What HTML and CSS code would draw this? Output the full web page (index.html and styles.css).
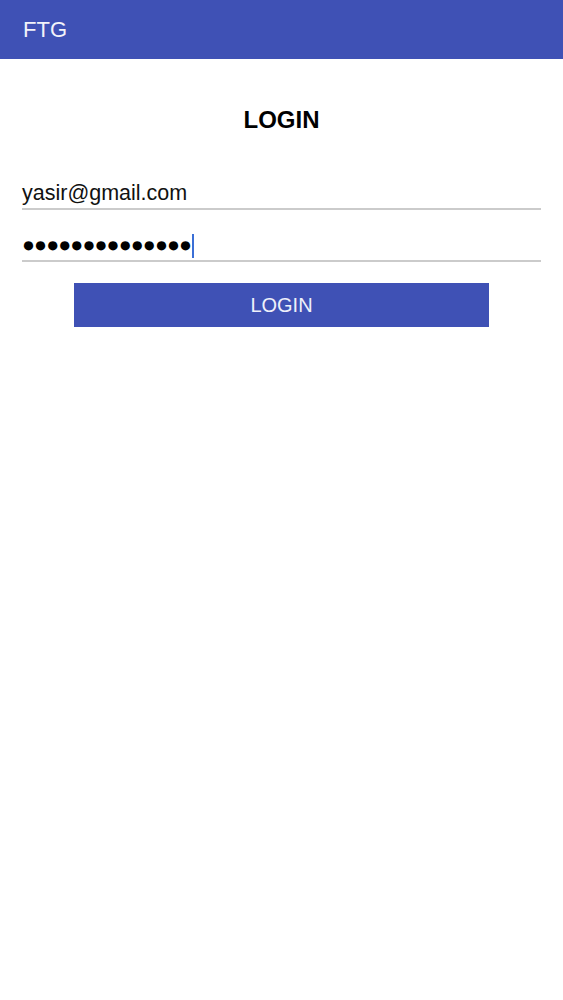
FILE: index.html
```html
<!DOCTYPE html>
<html lang="en">
<head>
<meta charset="utf-8">
<title>FTG</title>
<link rel="stylesheet" href="styles.css">
</head>
<body>
<header class="app-bar">
  <span class="app-title">FTG</span>
</header>
<main class="login">
  <h1 class="login-title">LOGIN</h1>
  <div class="field">
    <span class="field-text">yasir@gmail.com</span>
  </div>
  <div class="field field-password">
    <span class="dots">●●●●●●●●●●●●●●</span><span class="caret"></span>
  </div>
  <button class="login-btn" type="button">LOGIN</button>
</main>
</body>
</html>
```

FILE: styles.css
```css
html, body {
  margin: 0;
  padding: 0;
  background: #ffffff;
}

body {
  font-family: "Liberation Sans", Arial, sans-serif;
  color: #000;
}

.app-bar {
  height: 59px;
  background: #3f51b5;
  display: flex;
  align-items: center;
  padding-left: 23px;
  box-sizing: border-box;
}

.app-title {
  color: #f2f3fa;
  font-size: 22px;
  line-height: 22px;
}

.login {
  padding: 49px 22px 0 22px;
  display: flex;
  flex-direction: column;
}

.login-title {
  margin: 0;
  font-size: 24px;
  line-height: 24px;
  font-weight: bold;
  text-align: center;
  color: #000;
}

.field {
  margin-top: 46px;
  height: 30px;
  line-height: 30px;
  border-bottom: 2px solid #cbcbcb;
  font-size: 21.5px;
  color: #111;
  display: flex;
  align-items: center;
}

.field-text {
  line-height: 30px;
}

.field-password {
  margin-top: 20px;
}

.dots {
  font-size: 21.5px;
  line-height: 30px;
  letter-spacing: -0.9px;
  color: #000;
}

.caret {
  display: inline-block;
  width: 2px;
  height: 24px;
  background: #3b6fd6;
  margin-left: 1px;
  margin-top: 1px;
}

.login-btn {
  margin: 21px auto 0 auto;
  width: 415px;
  height: 44px;
  background: #3f51b5;
  border: none;
  border-radius: 0;
  color: #eef0fa;
  font-family: "Liberation Sans", Arial, sans-serif;
  font-size: 20px;
  padding: 0;
  padding-top: 1px;
}
```
